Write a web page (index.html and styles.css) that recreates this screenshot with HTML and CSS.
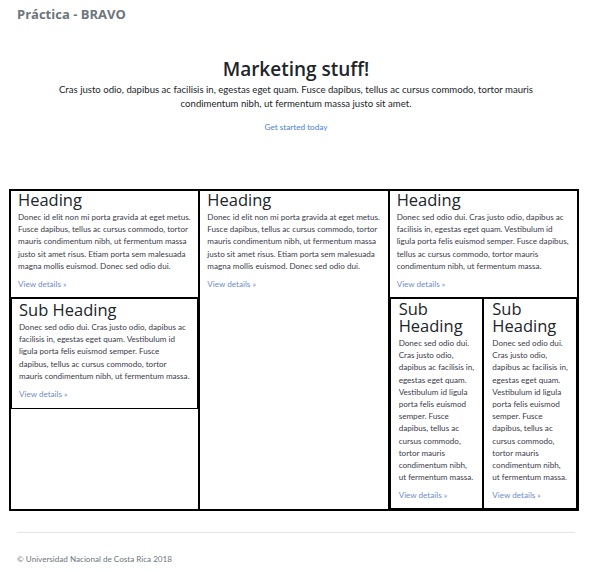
FILE: index.html
```html
<!DOCTYPE html>
<html lang="es">
<head>
<meta charset="utf-8">
<title>Práctica - BRAVO</title>
<link rel="stylesheet" href="styles.css">
</head>
<body>
<header class="topbar">
  <h3 class="brand">Práctica - BRAVO</h3>
</header>

<section class="hero">
  <h1 class="hero-title">Marketing stuff!</h1>
  <p class="lead">Cras justo odio, dapibus ac facilisis in, egestas eget quam. Fusce dapibus, tellus ac cursus commodo, tortor mauris condimentum nibh, ut fermentum massa justo sit amet.</p>
  <a class="cta" href="#">Get started today</a>
</section>

<main class="grid">
  <div class="col">
    <div class="card">
      <h2>Heading</h2>
      <p>Donec id elit non mi porta gravida at eget metus. Fusce dapibus, tellus ac cursus commodo, tortor mauris condimentum nibh, ut fermentum massa justo sit amet risus. Etiam porta sem malesuada magna mollis euismod. Donec sed odio dui.</p>
      <a class="more" href="#">View details »</a>
    </div>
    <div class="sub-row single">
      <div class="card sub">
        <h2>Sub Heading</h2>
        <p>Donec sed odio dui. Cras justo odio, dapibus ac facilisis in, egestas eget quam. Vestibulum id ligula porta felis euismod semper. Fusce dapibus, tellus ac cursus commodo, tortor mauris condimentum nibh, ut fermentum massa.</p>
        <a class="more" href="#">View details »</a>
      </div>
    </div>
  </div>
  <div class="col">
    <div class="card">
      <h2>Heading</h2>
      <p>Donec id elit non mi porta gravida at eget metus. Fusce dapibus, tellus ac cursus commodo, tortor mauris condimentum nibh, ut fermentum massa justo sit amet risus. Etiam porta sem malesuada magna mollis euismod. Donec sed odio dui.</p>
      <a class="more" href="#">View details »</a>
    </div>
  </div>
  <div class="col">
    <div class="card">
      <h2>Heading</h2>
      <p>Donec sed odio dui. Cras justo odio, dapibus ac facilisis in, egestas eget quam. Vestibulum id ligula porta felis euismod semper. Fusce dapibus, tellus ac cursus commodo, tortor mauris condimentum nibh, ut fermentum massa.</p>
      <a class="more" href="#">View details »</a>
    </div>
    <div class="sub-row double">
      <div class="card sub">
        <h2>Sub Heading</h2>
        <p>Donec sed odio dui. Cras justo odio, dapibus ac facilisis in, egestas eget quam. Vestibulum id ligula porta felis euismod semper. Fusce dapibus, tellus ac cursus commodo, tortor mauris condimentum nibh, ut fermentum massa.</p>
        <a class="more" href="#">View details »</a>
      </div>
      <div class="card sub">
        <h2>Sub Heading</h2>
        <p>Donec sed odio dui. Cras justo odio, dapibus ac facilisis in, egestas eget quam. Vestibulum id ligula porta felis euismod semper. Fusce dapibus, tellus ac cursus commodo, tortor mauris condimentum nibh, ut fermentum massa.</p>
        <a class="more" href="#">View details »</a>
      </div>
    </div>
  </div>
</main>

<footer class="footer">
  <p>© Universidad Nacional de Costa Rica 2018</p>
</footer>
</body>
</html>
```

FILE: styles.css
```css
* { box-sizing: border-box; }

body {
  margin: 0;
  font-family: "Lato", "Open Sans", sans-serif;
  color: #212529;
  background: #fff;
}

.topbar {
  padding: 5px 17px 0;
  height: 30px;
}

.brand {
  margin: 0;
  font-family: "Open Sans", sans-serif;
  font-size: 13px;
  line-height: 18px;
  font-weight: 700;
  color: #6c757d;
}

.hero {
  padding-top: 27px;
  text-align: center;
  height: 159px;
}

.hero-title {
  margin: 0;
  font-family: "Open Sans", sans-serif;
  font-size: 19px;
  line-height: 25px;
  font-weight: 600;
  color: #212529;
}

.lead {
  margin: 1px auto 10px;
  width: 500px;
  font-size: 9.6px;
  line-height: 14px;
  color: #212529;
}

.cta {
  display: block;
  font-size: 8.2px;
  line-height: 12px;
  color: #4a82d6;
  text-decoration: none;
}

.grid {
  margin-left: 9px;
  width: 570px;
  display: grid;
  grid-template-columns: 1fr 1fr 1fr;
  border: 1px solid #000;
}

.col {
  border: 1px solid #000;
  display: flex;
  flex-direction: column;
}

.card {
  padding: 0 7px 7px;
}

.card h2 {
  margin: 0 0 3px;
  font-family: "Open Sans", sans-serif;
  font-size: 16.5px;
  line-height: 17px;
  font-weight: 500;
  color: #212529;
}

.card p {
  margin: 0 0 6px;
  font-size: 8.1px;
  line-height: 12.2px;
  color: #3b3b4a;
}

.more {
  display: block;
  font-size: 8.1px;
  line-height: 12px;
  color: #6f8ccc;
  text-decoration: none;
}

.sub-row.single {
  border: 1px solid #000;
  border-top-width: 2px;
}

.sub-row.single .sub {
  padding: 2px 7.6px 8px 7px;
}

.sub-row.double {
  flex: 1 1 auto;
  display: grid;
  grid-template-columns: 1fr 1fr;
  border-top: 1px solid #000;
}

.sub-row.double .sub {
  border: 1px solid #000;
  padding-left: 8px;
  padding-right: 6px;
}

.sub {
  padding-top: 1px;
}

.footer {
  margin: 21px 17px 0;
  border-top: 1px solid #e5e5e5;
  padding-top: 20px;
}

.footer p {
  margin: 0;
  font-size: 8.1px;
  line-height: 12px;
  color: #6c757d;
}
```
